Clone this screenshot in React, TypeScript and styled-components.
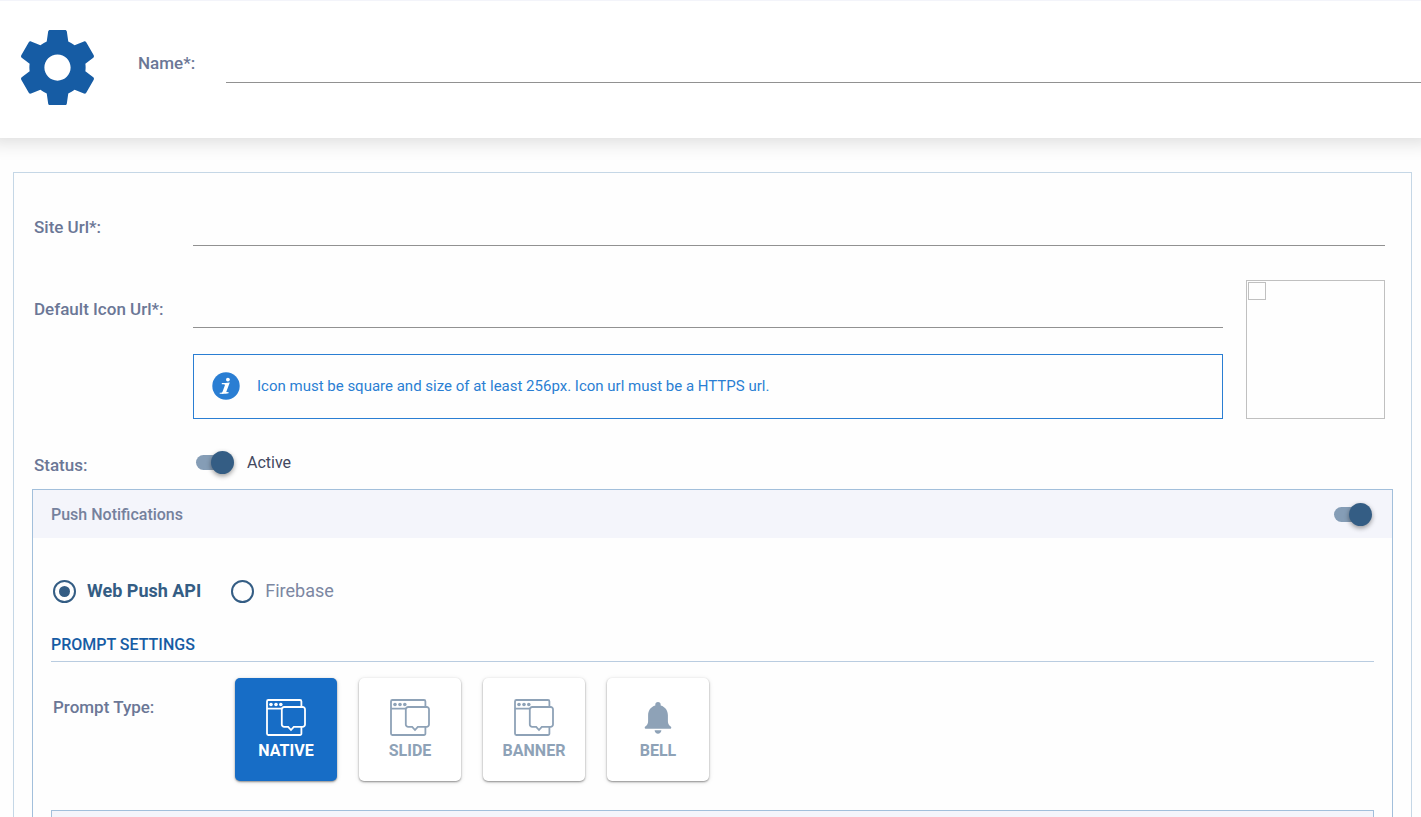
import React from 'react';
import styled, { createGlobalStyle, css } from 'styled-components';

const GlobalStyle = createGlobalStyle`
  *, *::before, *::after { box-sizing: border-box; }
  body {
    margin: 0;
    background: #fefefe;
    font-family: Roboto, "Liberation Sans", sans-serif;
    font-size: 16px;
    line-height: 20px;
    color: #6b7796;
  }
`;

const Page = styled.div`
  display: flex;
  flex-direction: column;
  height: 100vh;
  overflow: hidden;
`;

const TopBar = styled.header`
  display: flex;
  flex: none;
  align-items: flex-start;
  padding: 29px 0 33px 20px;
  border-top: 1px solid #f3f4fa;
  background: #fff;
  box-shadow: 0 -8px 18px 12px rgba(0, 0, 0, 0.14);
`;

const GearIcon = styled.svg`
  flex: none;
  width: 75px;
  height: 75px;
  margin-right: 43px;
  fill: #165ca4;
`;

const NameField = styled.div`
  display: flex;
  flex: 1;
  padding-top: 12px;
`;

const Label = styled.label<{ $width: number }>`
  flex: none;
  width: ${(p) => p.$width}px;
  padding-top: 12px;
  font-size: 17px;
  font-weight: 500;
`;

const NameLabel = styled(Label)`
  padding-top: 11px;
`;

const TextInput = styled.input`
  display: block;
  flex: 1;
  width: 100%;
  min-width: 0;
  height: 41px;
  padding: 0 4px;
  border: 0;
  border-bottom: 1px solid #919191;
  background: transparent;
  color: #3f4660;
  font: inherit;
  outline: none;
`;

const Panel = styled.main`
  flex: 1;
  min-height: 0;
  margin: 34px 9px 0 13px;
  padding: 32px 18px 0;
  border: 1px solid #c5d7e6;
  border-bottom: 0;
`;

const FieldRow = styled.div`
  display: flex;
  padding: 0 8px 0 2px;
`;

const IconRow = styled(FieldRow)`
  align-items: flex-end;
  gap: 23px;
  margin-top: 34px;
`;

const IconField = styled.div`
  display: flex;
  flex: 1;
`;

const IconColumn = styled.div`
  flex: 1;
`;

const InfoBox = styled.p`
  display: flex;
  align-items: center;
  gap: 17px;
  height: 65px;
  margin: 26px 0 0;
  padding: 0 18px 1px;
  border: 1px solid #2a7ed3;
  color: #2a7ed3;
  font-size: 15px;
`;

const Preview = styled.div`
  flex: none;
  width: 139px;
  height: 139px;
  padding: 1px;
  border: 1px solid #c0c0c0;
`;

const MissingImage = styled.div`
  width: 18px;
  height: 18px;
  border: 1px solid #c0c0c0;
`;

const StatusRow = styled(FieldRow)`
  align-items: flex-start;
  margin: 32px 0 14px;
`;

const StatusLabel = styled(Label)`
  padding-top: 4px;
`;

const SwitchLabel = styled.label`
  display: flex;
  align-items: center;
  gap: 13px;
  padding-left: 3px;
  color: #424860;
`;

const Switch = styled.input`
  display: grid;
  flex: none;
  align-items: center;
  width: 38px;
  height: 23px;
  margin: 0;
  appearance: none;

  &::before,
  &::after {
    content: '';
    grid-area: 1 / 1;
  }
  &::before {
    width: 34px;
    height: 15px;
    border-radius: 8px;
    background: #859db6;
  }
  &::after {
    width: 23px;
    height: 23px;
    border-radius: 50%;
    background: #345d84;
    box-shadow: 0 2px 5px rgba(0, 0, 0, 0.4);
  }
  &:checked::after {
    justify-self: end;
  }
`;

const Section = styled.section`
  height: 100%;
  border: 1px solid #a2bfdb;
`;

const SectionHeader = styled.div`
  display: flex;
  align-items: center;
  justify-content: space-between;
  height: 48px;
  padding: 1px 20px 0 18px;
  background: #f4f5fb;
`;

const SectionTitle = styled.h2`
  margin: 0;
  font-size: 16px;
  font-weight: 500;
  color: #75819d;
`;

const SectionBody = styled.div`
  padding: 41px 18px 0;
`;

const RadioGroup = styled.div`
  display: flex;
  gap: 30px;
  padding-left: 2px;
`;

const RadioLabel = styled.label`
  display: flex;
  align-items: center;
  gap: 11px;
  height: 24px;
  font-size: 18px;
  color: #7c87a2;

  &:has(:checked) {
    color: #345d84;
    font-weight: 700;
  }
`;

const Radio = styled.input`
  display: grid;
  place-items: center;
  width: 23px;
  height: 23px;
  margin: 0;
  border: 2px solid #345d84;
  border-radius: 50%;
  appearance: none;

  &:checked::before {
    content: '';
    width: 11px;
    height: 11px;
    border-radius: 50%;
    background: #345d84;
  }
`;

const GroupTitle = styled.h3`
  margin: 32px 0 16px;
  padding-bottom: 6px;
  border-bottom: 1px solid #b9cce0;
  color: #165ca4;
  font-size: 16px;
  font-weight: 500;
`;

const PromptRow = styled.div`
  display: flex;
  padding-left: 2px;
`;

const PromptLabel = styled.span`
  flex: none;
  width: 182px;
  padding-top: 19px;
  font-size: 17px;
  font-weight: 500;
`;

const Cards = styled.div`
  display: flex;
  gap: 22px;
`;

const Card = styled.button<{ $active?: boolean }>`
  display: flex;
  flex-direction: column;
  align-items: center;
  gap: 5px;
  width: 102px;
  height: 103px;
  padding: 21px 0 0;
  border: 0;
  border-radius: 5px;
  background: #fff;
  color: #8ea2b7;
  font: 700 16px/20px Roboto, "Liberation Sans", sans-serif;
  box-shadow: 0 1px 2px rgba(0, 0, 0, 0.4), 0 1px 5px rgba(0, 0, 0, 0.12);

  ${(p) =>
    p.$active &&
    css`
      background: #176dc6;
      color: #fff;
    `}
`;

const SubSection = styled.div`
  height: 60px;
  margin-top: 29px;
  border: 1px solid #a2bfdb;
  background: #f4f5fb;
`;

const WindowIcon = () => (
  <svg width="40" height="37" viewBox="0 0 40 37" fill="none" stroke="currentColor" strokeWidth="1.8" aria-hidden="true">
    <path d="M35.4 7.5V2.4a1.4 1.4 0 0 0-1.4-1.4H2.4A1.4 1.4 0 0 0 1 2.4v32.2A1.4 1.4 0 0 0 2.4 36H34a1.4 1.4 0 0 0 1.4-1.4V28M1 9.7h15" />
    <path d="M18.2 8H36.600a2.400 2.400 0 0 1 2.400 2.400V25.400a2.400 2.400 0 0 1-2.400 2.400H27.800L25 31l-2.800-3.200h-4a2.400 2.400 0 0 1-2.400-2.400V10.400A2.400 2.400 0 0 1 18.200 8Z" />
    <g fill="currentColor" stroke="none">
      <circle cx="5" cy="5.500" r="1.800" />
      <circle cx="10" cy="5.500" r="1.800" />
      <circle cx="14.800" cy="5.500" r="1.800" />
    </g>
  </svg>
);

const BellIcon = () => (
  <svg width="40" height="37" viewBox="0 0 40 37" fill="currentColor" aria-hidden="true">
    <path d="M20 3c1.700 0 2.700 1.100 2.700 2.700v.7c4.600 1.300 7.200 5 7.200 9.800v6c0 2.500 1.200 4 3.100 5.600.5.500.3 2-.5 2h-25c-.8 0-1-1.500-.5-2 1.900-1.600 3.100-3.100 3.100-5.600v-6c0-4.800 2.600-8.500 7.200-9.800v-.7C17.300 4.100 18.300 3 20 3Z" />
    <path d="M16.600 31.300h6.800c-.2 2-1.600 3.400-3.400 3.400s-3.200-1.400-3.400-3.400Z" />
  </svg>
);

const InfoIcon = () => (
  <svg width="28" height="28" viewBox="0 0 28 28" aria-hidden="true">
    <circle cx="14" cy="14" r="13.700" fill="#2a7ed3" />
    <circle cx="15.900" cy="7.600" r="1.900" fill="#fff" />
    <path d="M9.800 11c2.600 0 4.600-.2 8-.6l-3.400 9.200c-.2.700.3.800 2.100.5v1.200c-2.200.6-6 .7-8.800.5v-1.100c1.600.1 2.400 0 2.800-1l2.400-6.500c.2-.7-.2-1-3.100-1Z" fill="#fff" />
  </svg>
);

const promptTypes = [
  { name: 'NATIVE', icon: <WindowIcon />, active: true },
  { name: 'SLIDE', icon: <WindowIcon />, active: false },
  { name: 'BANNER', icon: <WindowIcon />, active: false },
  { name: 'BELL', icon: <BellIcon />, active: false },
];

export default function App() {
  return (
    <Page>
      <GlobalStyle />
      <TopBar>
        <GearIcon viewBox="2 2 20 20" aria-hidden="true">
          <path d="M19.430 12.980c.04-.32.07-.64.07-.98s-.03-.66-.07-.98l2.110-1.650c.19-.15.24-.42.12-.64l-2-3.460c-.12-.22-.39-.3-.61-.22l-2.490 1c-.52-.4-1.080-.73-1.690-.98l-.38-2.650C14.460 2.180 14.250 2 14 2h-4c-.25 0-.46.18-.49.42l-.38 2.650c-.61.25-1.170.59-1.690.98l-2.490-1c-.23-.09-.49 0-.61.22l-2 3.460c-.13.22-.07.49.12.64l2.110 1.650c-.04.32-.07.65-.07.98s.03.66.07.98l-2.110 1.650c-.19.15-.24.42-.12.64l2 3.460c.12.22.39.3.61.22l2.490-1c.52.4 1.080.73 1.690.98l.38 2.650c.03.24.24.42.49.42h4c.25 0 .46-.18.49-.42l.38-2.650c.61-.25 1.170-.59 1.690-.98l2.490 1c.23.09.49 0 .61-.22l2-3.460c.12-.22.07-.49-.12-.64l-2.110-1.650zM12 15.500c-1.930 0-3.500-1.570-3.500-3.500s1.570-3.500 3.500-3.500 3.500 1.570 3.500 3.500-1.570 3.500-3.500 3.500z" />
        </GearIcon>
        <NameField>
          <NameLabel $width={88} htmlFor="name">Name*:</NameLabel>
          <TextInput id="name" type="text" />
        </NameField>
      </TopBar>

      <Panel>
        <FieldRow>
          <Label $width={159} htmlFor="site-url">Site Url*:</Label>
          <TextInput id="site-url" type="text" />
        </FieldRow>

        <IconRow>
          <IconField>
            <Label $width={159} htmlFor="icon-url">Default Icon Url*:</Label>
            <IconColumn>
              <TextInput id="icon-url" type="text" />
              <InfoBox>
                <InfoIcon />
                Icon must be square and size of at least 256px. Icon url must be a HTTPS url.
              </InfoBox>
            </IconColumn>
          </IconField>
          <Preview>
            <MissingImage />
          </Preview>
        </IconRow>

        <StatusRow>
          <StatusLabel $width={159} htmlFor="status">Status:</StatusLabel>
          <SwitchLabel>
            <Switch id="status" type="checkbox" role="switch" defaultChecked />
            Active
          </SwitchLabel>
        </StatusRow>

        <Section>
          <SectionHeader>
            <SectionTitle id="push-title">Push Notifications</SectionTitle>
            <Switch type="checkbox" role="switch" aria-labelledby="push-title" defaultChecked />
          </SectionHeader>
          <SectionBody>
            <RadioGroup role="radiogroup" aria-labelledby="push-title">
              <RadioLabel>
                <Radio type="radio" name="provider" defaultChecked />
                Web Push API
              </RadioLabel>
              <RadioLabel>
                <Radio type="radio" name="provider" />
                Firebase
              </RadioLabel>
            </RadioGroup>

            <GroupTitle>PROMPT SETTINGS</GroupTitle>
            <PromptRow role="group" aria-labelledby="prompt-type">
              <PromptLabel id="prompt-type">Prompt Type:</PromptLabel>
              <Cards>
                {promptTypes.map((t) => (
                  <Card key={t.name} type="button" $active={t.active} aria-pressed={t.active}>
                    {t.icon}
                    {t.name}
                  </Card>
                ))}
              </Cards>
            </PromptRow>
            <SubSection />
          </SectionBody>
        </Section>
      </Panel>
    </Page>
  );
}
